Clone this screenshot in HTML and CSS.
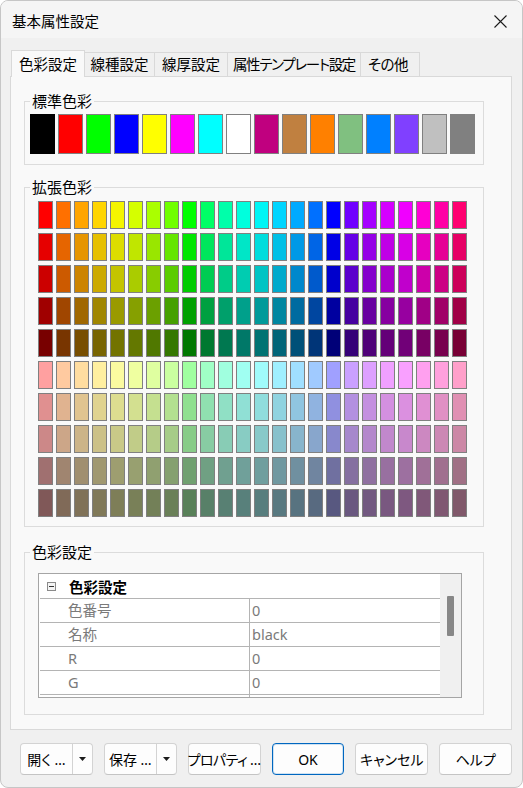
FILE: index.html
```html
<!DOCTYPE html>
<html lang="ja">
<head>
<meta charset="utf-8">
<title>基本属性設定</title>
<link rel="stylesheet" href="styles.css">
</head>
<body>
<div class="window">
  <header class="titlebar">
    <span class="title">基本属性設定</span>
    <svg class="close" width="13" height="13" viewBox="0 0 13 13" aria-hidden="true">
      <path d="M0.5 0.5L12.5 12.5M12.5 0.5L0.5 12.5" stroke="#1b1b1b" stroke-width="1.1" fill="none"/>
    </svg>
  </header>

  <main class="client">
    <nav class="tabs">
      <div class="tab tab-active tab-color">色彩設定</div>
      <div class="tab tab-linetype">線種設定</div>
      <div class="tab tab-linewidth">線厚設定</div>
      <div class="tab tab-template">属性テンプレート設定</div>
      <div class="tab tab-other">その他</div>
    </nav>

    <section class="panel">
      <fieldset class="group group-std">
        <legend>標準色彩</legend>
        <div class="std-palette">
          <div class="swatch swatch-current" style="background:#000000"></div>
          <div class="swatch" style="background:#ff0000"></div>
          <div class="swatch" style="background:#00ff00"></div>
          <div class="swatch" style="background:#0000ff"></div>
          <div class="swatch" style="background:#ffff00"></div>
          <div class="swatch" style="background:#ff00ff"></div>
          <div class="swatch" style="background:#00ffff"></div>
          <div class="swatch" style="background:#ffffff"></div>
          <div class="swatch" style="background:#c0007f"></div>
          <div class="swatch" style="background:#c08040"></div>
          <div class="swatch" style="background:#ff8000"></div>
          <div class="swatch" style="background:#80c080"></div>
          <div class="swatch" style="background:#0080ff"></div>
          <div class="swatch" style="background:#8040ff"></div>
          <div class="swatch" style="background:#c0c0c0"></div>
          <div class="swatch" style="background:#808080"></div>
        </div>
      </fieldset>

      <fieldset class="group group-ext">
        <legend>拡張色彩</legend>
        <div class="ext-palette" id="ext-palette"></div>
      </fieldset>

      <fieldset class="group group-info">
        <legend>色彩設定</legend>
        <div class="propgrid">
          <div class="pg-list">
            <div class="pg-cat">
              <svg class="pg-toggle" width="9" height="9" viewBox="0 0 9 9" aria-hidden="true">
                <rect x="0.5" y="0.5" width="8" height="8" fill="#f4f4f4" stroke="#8a8a8a"/>
                <path d="M2 4.5H7" stroke="#333" stroke-width="1"/>
              </svg>
              <span>色彩設定</span>
            </div>
            <div class="pg-row"><span class="pg-name">色番号</span><span class="pg-value">0</span></div>
            <div class="pg-row"><span class="pg-name">名称</span><span class="pg-value">black</span></div>
            <div class="pg-row"><span class="pg-name">R</span><span class="pg-value">0</span></div>
            <div class="pg-row"><span class="pg-name">G</span><span class="pg-value">0</span></div>
            <div class="pg-row"><span class="pg-name"></span><span class="pg-value"></span></div>
          </div>
          <div class="pg-scroll"><div class="pg-thumb"></div></div>
        </div>
      </fieldset>
    </section>
  </main>

  <footer class="footer">
    <div class="btn btn-split">
      <span class="btn-label">開く …</span>
      <span class="btn-drop"><svg width="7" height="4" viewBox="0 0 7 4" aria-hidden="true"><path d="M0 0H7L3.5 4Z" fill="#1b1b1b"/></svg></span>
    </div>
    <div class="btn btn-split">
      <span class="btn-label">保存 …</span>
      <span class="btn-drop"><svg width="7" height="4" viewBox="0 0 7 4" aria-hidden="true"><path d="M0 0H7L3.5 4Z" fill="#1b1b1b"/></svg></span>
    </div>
    <div class="btn btn-tight">プロパティ …</div>
    <div class="btn btn-default">OK</div>
    <div class="btn">キャンセル</div>
    <div class="btn">ヘルプ</div>
  </footer>
</div>
<script src="app.js"></script>
</body>
</html>
```

FILE: styles.css
```css
* { box-sizing: border-box; }

html, body {
  margin: 0;
  padding: 0;
  background: #ffffff;
}

body {
  font-family: "Noto Sans", "Noto Sans CJK JP", sans-serif;
  font-size: 14.5px;
  font-feature-settings: "palt";
  color: #000;
}

/* dialog frame */
.window {
  width: 523px;
  height: 788px;
  border: 1px solid #c6c6c6;
  border-radius: 8px;
  background: #f0f0f0;
  overflow: hidden;
  display: flex;
  flex-direction: column;
}

.titlebar {
  height: 37px;
  flex: none;
  display: flex;
  align-items: center;
  justify-content: space-between;
  padding: 3px 15px 0 11px;
  background: #f5f5f5;
}

.title {
  font-size: 14.5px;
  line-height: 20px;
}

.close { display: block; }

/* tab control */
.client {
  flex: none;
  padding: 12px 10px 0 9px;
}

.tabs {
  height: 26px;
  display: flex;
  align-items: flex-end;
  padding-left: 1px;
}

.tab {
  height: 24px;
  border: 1px solid #d9d9d9;
  border-bottom: none;
  margin-left: -1px;
  background: #f0f0f0;
  text-align: center;
  line-height: 23px;
  white-space: nowrap;
}

.tab:first-child { margin-left: 0; }

.tab-active {
  height: 27px;
  margin-bottom: -1px;
  background: #f9f9f9;
  position: relative;
  z-index: 1;
  line-height: 26px;
}

.tab-color { width: 74px; }
.tab-linetype { width: 71px; }
.tab-linewidth { width: 74px; }
.tab-template { width: 134px; letter-spacing: -1.3px; }
.tab-other { width: 60px; letter-spacing: -0.5px; padding-right: 4px; }

.panel {
  height: 654px;
  border: 1px solid #d9d9d9;
  background: #f9f9f9;
  padding: 14px 0 0 13px;
}

/* group boxes */
.group {
  width: 460px;
  margin: 0;
  min-width: 0;
  border: 1px solid #dcdcdc;
  padding: 3px 7px 10px 5px;
}

.group legend {
  padding: 0 2px;
  font-size: 15px;
  line-height: 20px;
}

.group-ext {
  margin-top: 12px;
  padding-top: 4px;
  padding-bottom: 9px;
}

.group-info {
  margin-top: 15px;
  padding-top: 11px;
  padding-bottom: 16px;
}

/* colour swatches */
.std-palette {
  display: flex;
  gap: 3px;
}

.swatch {
  width: 25px;
  height: 40px;
  border: 1px solid #808080;
}

.swatch-current { border-color: #000; }

.ext-palette {
  display: grid;
  grid-template-columns: repeat(24, 15px);
  grid-auto-rows: 28px;
  column-gap: 3px;
  row-gap: 4px;
  margin-left: 8px;
}

.swatch-sm {
  border: 1px solid #808080;
}

/* property grid */
.propgrid {
  width: 424px;
  height: 125px;
  margin-left: 8px;
  border: 1px solid #a5a5a5;
  background: #ffffff;
  display: flex;
}

.pg-list {
  width: 401px;
  padding-left: 1px;
  overflow: hidden;
}

.pg-cat {
  height: 24px;
  display: flex;
  align-items: center;
  padding-left: 7px;
  font-weight: 700;
  font-size: 14.5px;
}

.pg-toggle {
  display: block;
  margin-right: 13px;
}

.pg-row {
  height: 24px;
  flex: none;
  display: flex;
  border-top: 1px solid #b4b4b4;
  color: #7a7a7a;
  line-height: 23px;
  font-size: 14.5px;
}

.pg-name {
  width: 209px;
  padding-left: 28px;
}

.pg-value {
  flex: 1;
  border-left: 1px solid #b4b4b4;
  padding-left: 2px;
}

.pg-scroll {
  width: 21px;
  background: #f0f0f0;
  padding: 22px 7px 0;
}

.pg-thumb {
  width: 7px;
  height: 40px;
  background: #878787;
  border-radius: 1px;
}

/* dialog buttons */
.footer {
  flex: none;
  display: flex;
  gap: 11px;
  padding: 13px 10px 12px 19px;
}

.btn {
  width: 73px;
  height: 32px;
  border: 1px solid #d3d3d3;
  border-bottom-color: #c4c4c4;
  border-radius: 4px;
  background: #fdfdfd;
  display: flex;
  align-items: center;
  justify-content: center;
  font-size: 14px;
  white-space: nowrap;
}

.btn-tight { letter-spacing: -0.6px; }

.btn-split { justify-content: flex-start; }

.btn-label {
  width: 51px;
  text-align: center;
}

.btn-drop {
  flex: 1;
  align-self: stretch;
  border-left: 1px solid #d3d3d3;
  display: flex;
  align-items: center;
  justify-content: center;
}

.btn-drop svg { display: block; }

.btn-default {
  border: 1px solid #0067c0;
  box-shadow: inset 0 0 0 1px rgba(0, 103, 192, 0.18);
}
```

FILE: app.js
```js
// Extended palette: 24 hues × 10 tones (5 darkening steps, 5 pastel steps).
(function () {
  var hues = [
    [255, 0, 0], [255, 112, 0], [255, 165, 0], [255, 213, 0],
    [245, 245, 0], [213, 255, 0], [170, 255, 0], [112, 255, 0],
    [0, 255, 0], [0, 255, 102], [0, 255, 170], [0, 255, 221],
    [0, 245, 245], [0, 213, 255], [0, 170, 255], [0, 112, 255],
    [0, 0, 255], [112, 0, 255], [165, 0, 255], [213, 0, 255],
    [240, 0, 255], [255, 0, 213], [255, 0, 165], [255, 0, 112]
  ];
  // [value for full channel, value for empty channel]
  var tones = [
    [255, 0], [230, 0], [204, 0], [160, 0], [120, 0],
    [255, 160], [224, 144], [204, 136], [160, 112], [128, 88]
  ];
  var host = document.getElementById('ext-palette');
  tones.forEach(function (t) {
    var hi = t[0], lo = t[1];
    hues.forEach(function (h) {
      var c = h.map(function (v) { return Math.round(lo + (hi - lo) * v / 255); });
      var cell = document.createElement('div');
      cell.className = 'swatch-sm';
      cell.style.background = 'rgb(' + c.join(',') + ')';
      host.appendChild(cell);
    });
  });
})();
```
